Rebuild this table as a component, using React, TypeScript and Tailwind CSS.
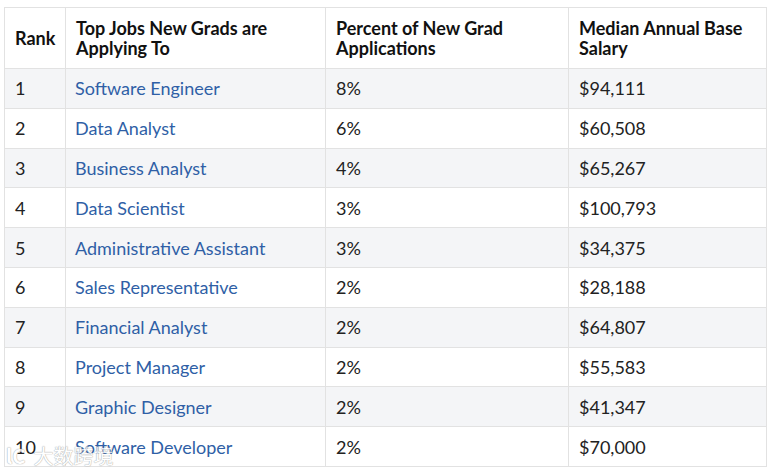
import React from "react";

const rows = [
  ["1", "Software Engineer", "8%", "$94,111"],
  ["2", "Data Analyst", "6%", "$60,508"],
  ["3", "Business Analyst", "4%", "$65,267"],
  ["4", "Data Scientist", "3%", "$100,793"],
  ["5", "Administrative Assistant", "3%", "$34,375"],
  ["6", "Sales Representative", "2%", "$28,188"],
  ["7", "Financial Analyst", "2%", "$64,807"],
  ["8", "Project Manager", "2%", "$55,583"],
  ["9", "Graphic Designer", "2%", "$41,347"],
  ["10", "Software Developer", "2%", "$70,000"],
];

export default function App() {
  return (
    <div
      className="relative w-[771px] h-[472px] bg-white pl-[4px] pt-[7px] text-[#222]"
      style={{ fontFamily: "Lato, 'Noto Sans', sans-serif" }}
    >
      <table className="border-collapse w-[762px] table-fixed text-[18px]">
        <colgroup>
          <col className="w-[61px]" />
          <col className="w-[260px]" />
          <col className="w-[243px]" />
          <col className="w-[198px]" />
        </colgroup>
        <thead>
          <tr className="h-[61px]">
            {["Rank", "Top Jobs New Grads are Applying To", "Percent of New Grad Applications", "Median Annual Base Salary"].map((h, i) => (
              <th
                key={i}
                className="border border-[#e2e2e2] pl-[10px] pr-[9px] text-left align-middle font-bold leading-[20px] text-[#111] text-[18px]"
              >
                {h}
              </th>
            ))}
          </tr>
        </thead>
        <tbody>
          {rows.map((r, i) => (
            <tr key={i} className={i % 2 === 0 ? "h-[39.8px] bg-[#f4f5f7]" : "h-[39.8px] bg-white"}>
              <td className="border border-[#e2e2e2] pl-[10px] pr-[9px] py-0 align-middle leading-[20px]">{r[0]}</td>
              <td className="border border-[#e2e2e2] pl-[9px] pr-[9px] py-0 align-middle leading-[20px] text-[#2f5fa6]">{r[1]}</td>
              <td className="border border-[#e2e2e2] pl-[10px] pr-[9px] py-0 align-middle leading-[20px]">{r[2]}</td>
              <td className="border border-[#e2e2e2] pl-[10px] pr-[9px] py-0 align-middle leading-[20px]">{r[3]}</td>
            </tr>
          ))}
        </tbody>
      </table>
      <div
        className="absolute left-[6px] top-[444px] flex items-center gap-[8px] text-[20px] leading-[24px] text-white opacity-80 pointer-events-none"
        style={{ fontFamily: "'Noto Sans CJK SC', sans-serif", textShadow: "0 0 1px #999, 0 0 1px #999" }}
      >
        <span className="font-bold">lC</span>
        <span>大数跨境</span>
      </div>
    </div>
  );
}
